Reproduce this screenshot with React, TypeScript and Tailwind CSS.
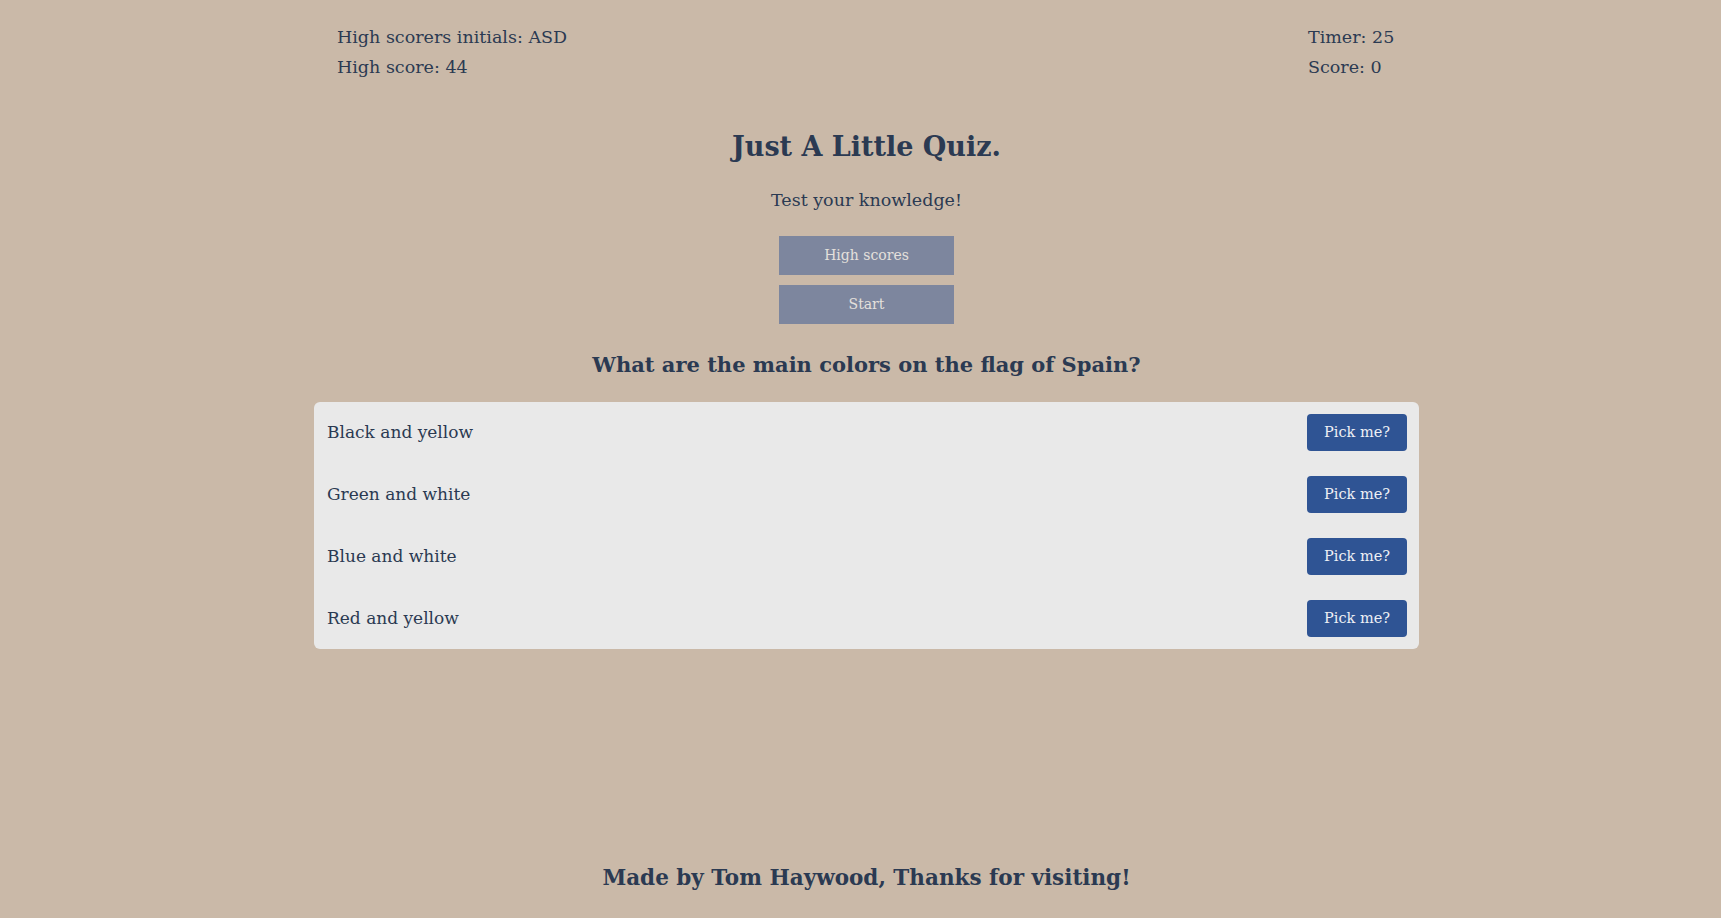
import React from "react";

const answers = ["Black and yellow", "Green and white", "Blue and white", "Red and yellow"];

export default function App() {
  return (
    <div
      className="min-h-[918px] bg-[#cab9a8] pl-[12px] text-[#2b3a52]"
      style={{ fontFamily: '"DejaVu Serif", Georgia, serif' }}
    >
      <div className="mx-auto flex min-h-[918px] w-[1105px] flex-col">
        {/* header: high score / timer */}
        <header className="flex justify-between px-[23px] pt-[22px] text-[17.5px] leading-[30px]">
          <div>
            <p>High scorers initials: ASD</p>
            <p>High score: 44</p>
          </div>
          <div className="w-[88px]">
            <p>Timer: 25</p>
            <p>Score: 0</p>
          </div>
        </header>

        <main className="flex flex-col items-center">
          <h1 className="mt-[47px] text-[27px] font-bold leading-[36px]">Just A Little Quiz.</h1>
          <p className="mt-[23px] text-[17.5px] leading-[24px]">Test your knowledge!</p>

          <div className="mt-[24px] flex flex-col gap-[10px]">
            <button className="h-[39px] w-[175px] bg-[#7d869e] text-[14px] text-[#e4e0dc]">High scores</button>
            <button className="h-[39px] w-[175px] bg-[#7d869e] text-[14px] text-[#e4e0dc]">Start</button>
          </div>

          <h2 className="mt-[27px] text-[21px] font-bold leading-[28px]">
            What are the main colors on the flag of Spain?
          </h2>

          <ul className="mt-[23px] flex w-full flex-col gap-[25px] rounded-[6px] bg-[#e9e9e9] py-[12px] pl-[13px] pr-[12px]">
            {answers.map((a) => (
              <li key={a} className="flex h-[37px] items-center justify-between">
                <span className="text-[17px]">{a}</span>
                <button className="h-[37px] w-[100px] rounded-[4px] bg-[#2f5494] text-[14.5px] text-[#eef0f5]">
                  Pick me?
                </button>
              </li>
            ))}
          </ul>
        </main>

        <footer className="mt-auto pb-[26px] text-center text-[21.5px] font-bold leading-[28px]">
          Made by Tom Haywood, Thanks for visiting!
        </footer>
      </div>
    </div>
  );
}
